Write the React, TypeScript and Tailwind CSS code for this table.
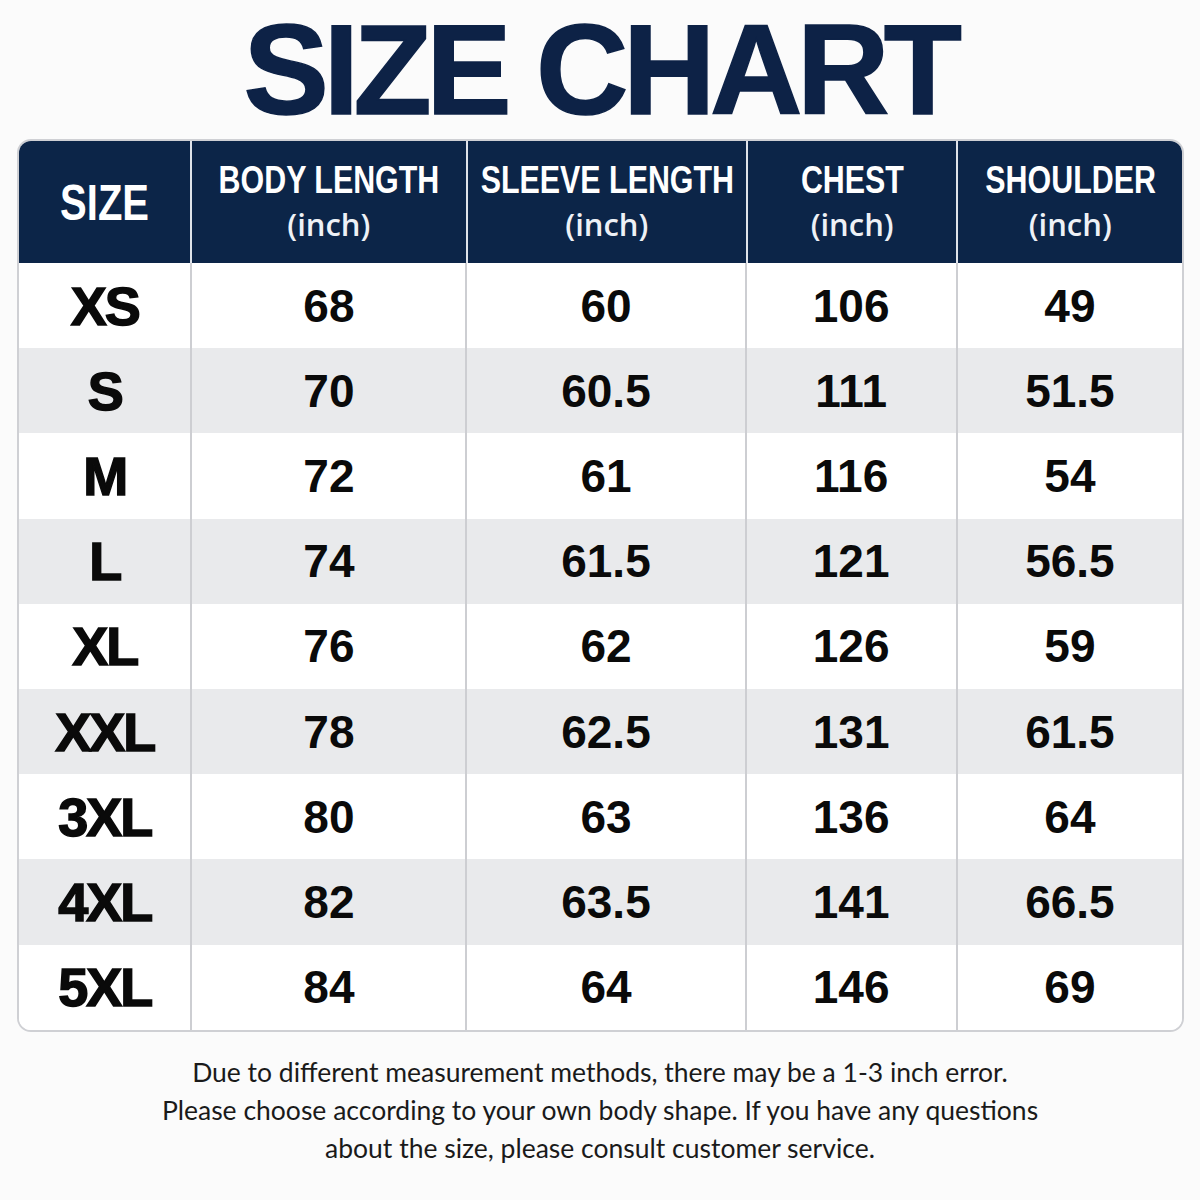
const headers = [
  { title: 'SIZE', unit: '' },
  { title: 'BODY LENGTH', unit: '(inch)' },
  { title: 'SLEEVE LENGTH', unit: '(inch)' },
  { title: 'CHEST', unit: '(inch)' },
  { title: 'SHOULDER', unit: '(inch)' },
]

const rows = [
  ['XS', '68', '60', '106', '49'],
  ['S', '70', '60.5', '111', '51.5'],
  ['M', '72', '61', '116', '54'],
  ['L', '74', '61.5', '121', '56.5'],
  ['XL', '76', '62', '126', '59'],
  ['XXL', '78', '62.5', '131', '61.5'],
  ['3XL', '80', '63', '136', '64'],
  ['4XL', '82', '63.5', '141', '66.5'],
  ['5XL', '84', '64', '146', '69'],
]

const widths = ['w-[172px]', 'w-[276px]', 'w-[280px]', 'w-[212px]', 'w-[227px]']

export default function App() {
  return (
    <div className="flex h-[1200px] w-[1200px] flex-col items-center bg-[#fbfbfb] font-['Liberation_Sans',sans-serif]">
      <h1 className="h-[139px] pt-[2px] text-[128px] leading-[135px] font-bold tracking-[-5.5px] text-[#0d2246] [-webkit-text-stroke:1.5px_#0d2246]">
        SIZE CHART
      </h1>

      <div className="ml-[17px] w-[1167px] self-start overflow-hidden rounded-[14px] border-2 border-[#cfd0d4] bg-white">
        <div className="flex h-[122px] bg-[#0c2548]">
          {headers.map((h, i) => (
            <div
              key={h.title}
              className={`${widths[i]} flex flex-col items-center justify-center pt-[2px] ${i > 0 ? 'border-l-2 border-[#dfe3ea]' : ''}`}
            >
              <span
                className={`scale-x-[0.8] font-bold whitespace-nowrap text-white ${
                  i === 0 ? 'text-[50px] leading-[56px]' : 'text-[38px] leading-[42px]'
                }`}
              >
                {h.title}
              </span>
              {h.unit && (
                <span className="font-['Open_Sans',sans-serif] text-[31px] leading-[46px] font-semibold text-[#eef1f6]">{h.unit}</span>
              )}
            </div>
          ))}
        </div>

        {rows.map((row, r) => (
          <div key={row[0]} className={`flex h-[85.2px] ${r % 2 === 1 ? 'bg-[#e9eaec]' : 'bg-white'}`}>
            {row.map((cell, i) => (
              <div
                key={i}
                className={`${widths[i]} flex items-center justify-center text-[#0a0a0a] ${i > 0 ? 'border-l-2 border-[#cdced2]' : ''}`}
              >
                {i === 0 ? (
                  <span className="text-[54px] leading-none font-black tracking-[-2px] [-webkit-text-stroke:1.5px_#0a0a0a]">{cell}</span>
                ) : (
                  <span className="text-[46px] leading-none font-bold">{cell}</span>
                )}
              </div>
            ))}
          </div>
        ))}
      </div>

      <div className="mt-[21px] text-center font-['Lato',sans-serif] text-[26.5px] leading-[38px] text-[#1a1a1a]">
        <p>Due to different measurement methods, there may be a 1-3 inch error.</p>
        <p>Please choose according to your own body shape. If you have any questions</p>
        <p>about the size, please consult customer service.</p>
      </div>
    </div>
  )
}
